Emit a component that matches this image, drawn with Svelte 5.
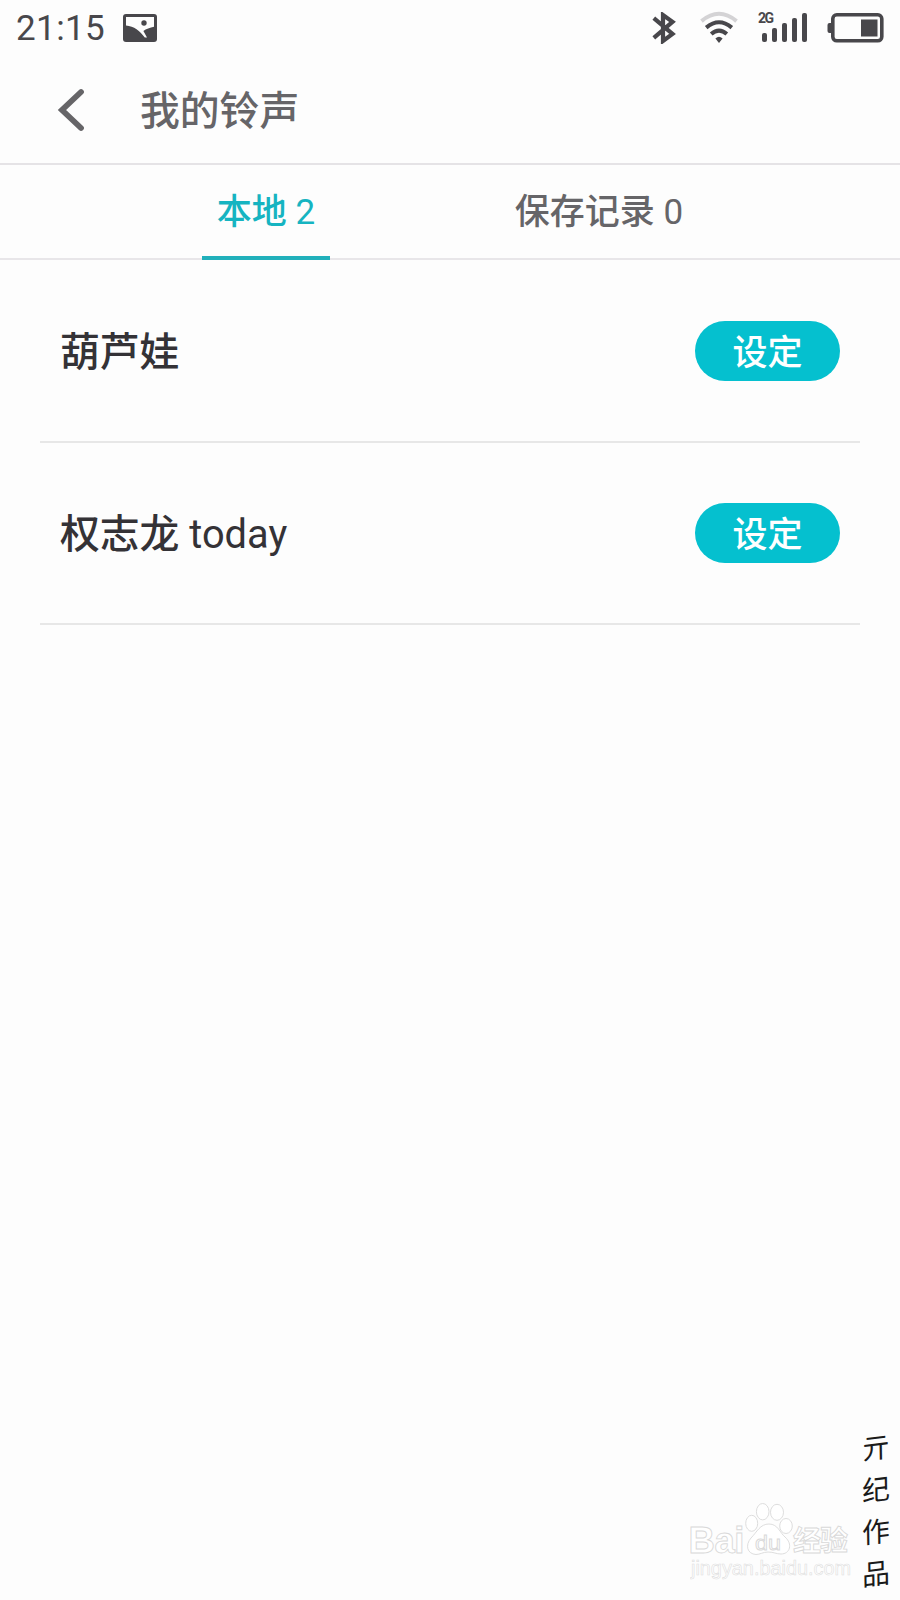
<script lang="ts">
  // State
  let activeTab = $state('local');

  const ringtones = [
    { id: 1, name: '葫芦娃', suffix: '' },
    { id: 2, name: '权志龙', suffix: 'today' }
  ];

  const tabs = [
    { key: 'local', label: '本地', count: ringtones.length },
    { key: 'saved', label: '保存记录', count: 0 }
  ];

  const signature = ['亓', '纪', '作', '品'];

  // Signal bar heights, left to right
  const bars = [9, 14, 19, 24, 29];
</script>

<div class="screen">
  <div class="status-bar">
    <span class="time">21:15</span>
    <svg class="photo" width="34" height="28" viewBox="0 0 34 28">
      <rect width="34" height="28" rx="3" fill="#48474b" />
      <path d="M3 3H31V12.8C27 13.7 23 15 20.4 16.9L24 23.6H21.8C17 16.7 11 12.3 3 11.5Z" fill="#fdfdfd" />
      <circle cx="21" cy="9" r="2.7" fill="#48474b" />
    </svg>

    <div class="status-icons">
      <svg class="bluetooth" width="24" height="32" viewBox="0 0 24 32">
        <path d="M1.8 6.2L20.5 22L11 29V3L20.5 9.8L1.8 25.8" fill="none" stroke="#48474b" stroke-width="4.2" />
      </svg>
      <svg class="wifi" width="38" height="33" viewBox="0 0 38 33">
        <g fill="none" stroke-width="4">
          <path d="M1.5 10.1Q19 -4.5 36.5 10.1" stroke="#d4d3d5" />
          <path d="M6.2 16.6Q19 5.9 31.8 16.6" stroke="#48474b" />
          <path d="M11.2 23.1Q19 16.2 26.8 23.1" stroke="#48474b" />
        </g>
        <path d="M15.4 27.5Q19 24 22.6 27.5L19 32Z" fill="#48474b" />
      </svg>
      <div class="signal">
        <span class="network">2G</span>
        {#each bars as height}
          <i style="height: {height}px"></i>
        {/each}
      </div>
      <svg class="battery" width="57" height="30" viewBox="0 0 57 30">
        <rect x="5.8" y="1.8" width="49" height="26" rx="4" fill="none" stroke="#48474b" stroke-width="3.6" />
        <path d="M4 10H2.5Q.5 10 .5 12V18Q.5 20 2.5 20H4Z" fill="#48474b" />
        <rect x="34" y="6.5" width="16.5" height="17" fill="#48474b" />
      </svg>
    </div>
  </div>

  <header>
    <button class="back" aria-label="返回">
      <svg width="28" height="44" viewBox="0 0 28 44">
        <path d="M24 4L5 22L24 40" fill="none" stroke="#666568" stroke-width="5.8" stroke-linecap="round" />
      </svg>
    </button>
    <h1>我的铃声</h1>
  </header>

  <nav>
    {#each tabs as tab}
      <button class="tab" class:active={activeTab === tab.key} onclick={() => (activeTab = tab.key)}>
        <b>{tab.label}</b> {tab.count}
      </button>
    {/each}
  </nav>

  <ul>
    {#each ringtones as tone (tone.id)}
      <li>
        <span class="name"><b>{tone.name}</b> {tone.suffix}</span>
        <button class="set">设定</button>
      </li>
    {/each}
  </ul>

  <div class="watermark">
    <svg width="165" height="82" viewBox="0 0 165 82">
      <g fill="#fff" stroke="#d9d9d9" stroke-width="0.9">
        <text class="wm" x="-1.5" y="51" font-size="36.5" textLength="56">Bai</text>
        <ellipse cx="61.7" cy="21.3" rx="6" ry="8" />
        <ellipse cx="72.7" cy="9.7" rx="6.3" ry="8.2" />
        <ellipse cx="87" cy="10.3" rx="6.5" ry="8" />
        <ellipse cx="96" cy="24" rx="6.3" ry="7.5" />
        <path d="M79 22C88 22 90 31 95 35C103 42 100 52 91 52C86 52 84 50 78 50C73 50 70 52.5 66 52.5C57 52 55 43 61 36C67 30 70 22 79 22Z" />
        <text class="wm thin" x="65" y="48" font-size="21" textLength="26" lengthAdjust="spacingAndGlyphs">du</text>
        <text class="wm cn" x="103" y="49" font-size="28" textLength="55">经验</text>
        <text class="wm url" x="1" y="73" font-size="20" textLength="160" lengthAdjust="spacingAndGlyphs">jingyan.baidu.com</text>
      </g>
    </svg>
  </div>

  <div class="signature">
    {#each signature as char}
      <span>{char}</span>
    {/each}
  </div>
</div>

<style>
  :global(body) {
    background: #fdfdfd;
  }

  .screen {
    position: relative;
    height: 1600px;
    overflow: hidden;
    background: #fdfdfd;
    font-family: Roboto, 'Noto Sans CJK SC', sans-serif;
    color: #343236;
  }

  button {
    padding: 0;
    border: none;
    background: none;
    color: inherit;
    font: inherit;
    cursor: pointer;
  }

  svg { display: block; }
  b { font-weight: 500; }

  .status-bar {
    display: flex;
    align-items: center;
    height: 55px;
    padding: 0 16px;
    color: #48474b;
  }
  .time {
    width: 107px;
    padding-top: 2px;
    font-size: 35px;
    letter-spacing: 0.4px;
  }
  .status-icons {
    display: flex;
    align-items: center;
    margin-left: auto;
  }
  .wifi { margin-left: 24px; }
  .signal {
    position: relative;
    display: flex;
    align-items: flex-end;
    gap: 5px;
    height: 29px;
    margin-left: 20px;
    padding-left: 4px;
  }
  .signal i {
    width: 5px;
    border-radius: 2px;
    background: #48474b;
  }
  .network {
    position: absolute;
    top: 0;
    left: 0;
    font-size: 14px;
    line-height: 11px;
    font-weight: 700;
    letter-spacing: -1.5px;
  }
  .battery { margin-left: 20px; }

  header {
    display: flex;
    align-items: center;
    height: 108px;
    padding-left: 57px;
    border-bottom: 2px solid #e5e3e6;
  }
  .back { padding-top: 2px; }
  h1 {
    margin: 0 0 0 55px;
    padding-top: 5px;
    font-size: 39.8px;
    font-weight: 500;
    line-height: 60px;
    color: #666568;
  }

  nav {
    display: grid;
    grid-template-columns: 333px 333px;
    justify-items: center;
    height: 93px;
    padding-left: 99.5px;
    border-bottom: 2px solid #e8e6e9;
  }
  .tab {
    height: 95px;
    padding: 0 15px 4px;
    border-bottom: 4px solid transparent;
    font-size: 35px;
    color: #666568;
  }
  .tab.active {
    border-color: #21b0bb;
    color: #16b4c1;
  }

  ul {
    margin: 0;
    padding: 1px 40px 0;
    list-style: none;
  }
  li {
    display: flex;
    align-items: center;
    justify-content: space-between;
    height: 180px;
    padding: 0 20px;
    border-bottom: 2px solid #e7e7e7;
  }
  .name {
    padding-bottom: 5px;
    font-size: 39.8px;
  }
  .set {
    width: 145px;
    height: 60px;
    padding-top: 5px;
    border-radius: 30px;
    background: #05c0cf;
    color: #fff;
    font-size: 35px;
    font-weight: 500;
    line-height: 55px;
  }

  .watermark {
    position: absolute;
    left: 690px;
    top: 1502px;
  }
  .wm { font-family: 'Liberation Sans', sans-serif; font-weight: 700; }
  .thin { font-weight: 400; }
  .cn { font-family: 'Noto Sans CJK SC', sans-serif; }
  .url { font-weight: 400; stroke: #dedede; stroke-width: 0.6px; }

  .signature {
    position: absolute;
    top: 1425px;
    left: 862px;
    display: flex;
    flex-direction: column;
    font-family: 'Noto Sans CJK SC', sans-serif;
    font-size: 28px;
    line-height: 42px;
    color: #1a1a1a;
  }
  .signature span { transform: rotate(-7deg) skewX(-6deg); }
</style>
